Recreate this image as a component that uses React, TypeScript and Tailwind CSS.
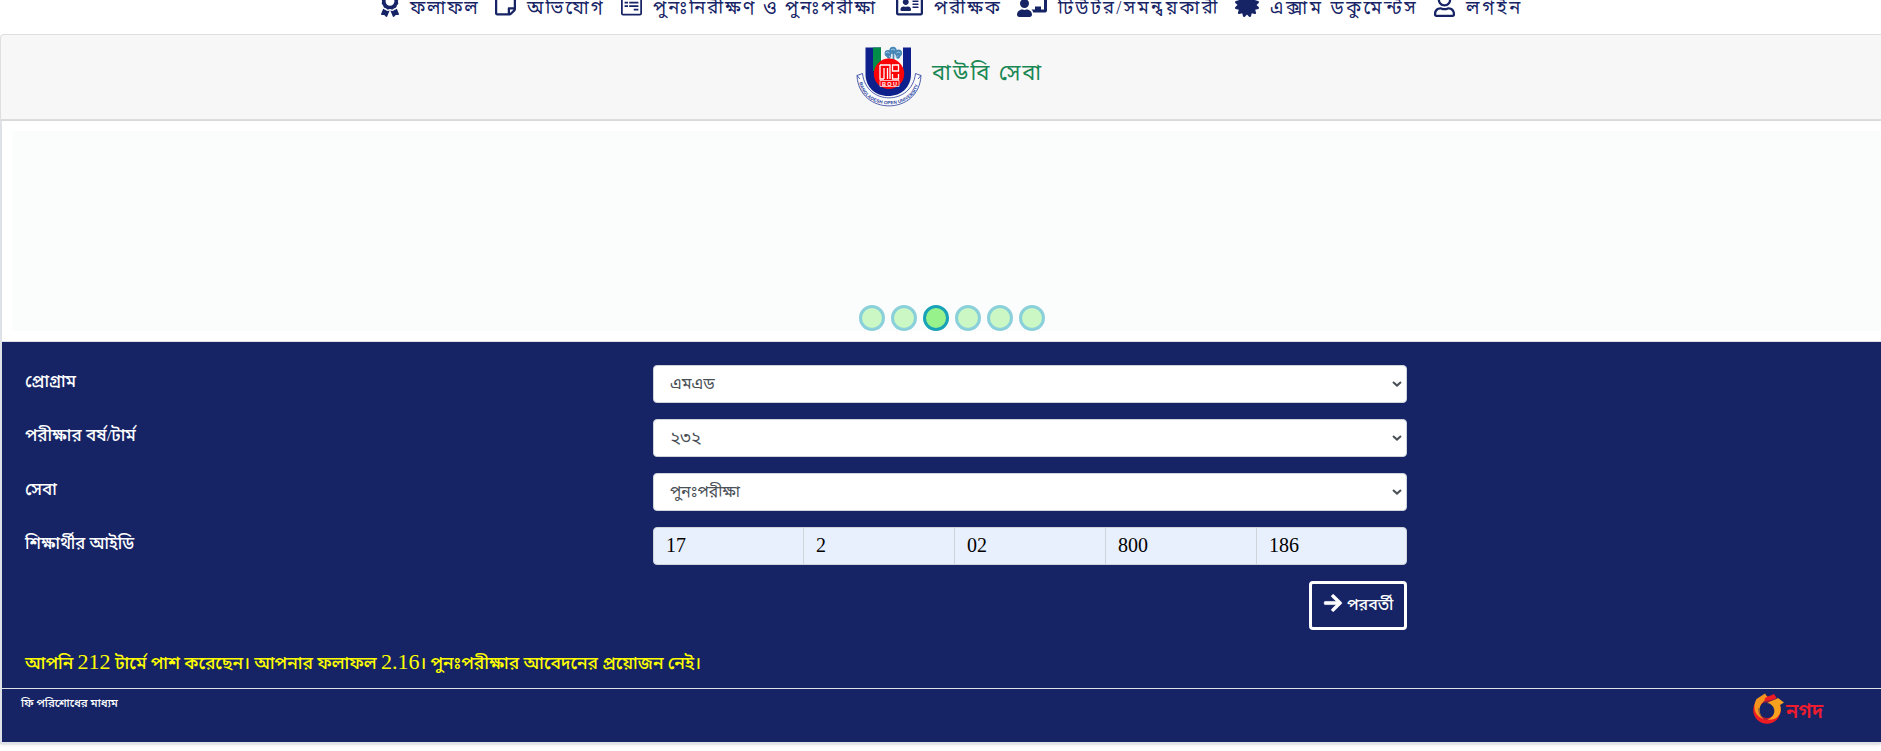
import React from "react";
import {
  FaAward,
  FaRegStickyNote,
  FaWpforms,
  FaRegAddressCard,
  FaChalkboardTeacher,
  FaCertificate,
  FaRegUser,
  FaArrowRight,
} from "react-icons/fa";

const navItems = [
  { icon: FaAward, iconBox: "w-[18px]", label: "ফলাফল", box: "w-[85px]", tracking: "tracking-[1.8px]" },
  { icon: FaRegStickyNote, iconBox: "w-[21px]", label: "অভিযোগ", box: "w-[94px]", tracking: "tracking-[2.2px]" },
  { icon: FaWpforms, iconBox: "w-[21px]", label: "পুনঃনিরীক্ষণ ও পুনঃপরীক্ষা", box: "w-[243px]", tracking: "tracking-[2px]" },
  { icon: FaRegAddressCard, iconBox: "w-[27px]", label: "পরীক্ষক", box: "w-[83px]", tracking: "tracking-[2.1px]" },
  { icon: FaChalkboardTeacher, iconBox: "w-[30px]", label: "টিউটর/সমন্বয়কারী", box: "w-[177px]", tracking: "tracking-[2.3px]" },
  { icon: FaCertificate, iconBox: "w-[24px]", label: "এক্সাম ডকুমেন্টস", box: "w-[164px]", tracking: "tracking-[2.5px]" },
  { icon: FaRegUser, iconBox: "w-[21px]", label: "লগইন", box: "w-[60px]", tracking: "tracking-[2.7px]" },
];

const selects = [
  { label: "প্রোগ্রাম", value: "এমএড", size: "text-[16px]" },
  { label: "পরীক্ষার বর্ষ/টার্ম", value: "২৩২", size: "text-[17.5px]" },
  { label: "সেবা", value: "পুনঃপরীক্ষা", size: "text-[15.7px]" },
];

const idParts = ["17", "2", "02", "800", "186"];

function Nav() {
  return (
    <nav className="flex h-[34px] shrink-0 overflow-hidden pl-[381px] text-[#162466]">
      {navItems.map(({ icon: Icon, iconBox, label, box, tracking }) => (
        <a key={label} className="flex shrink-0 whitespace-nowrap">
          <Icon className={`-mt-[7px] mr-[11px] h-6 shrink-0 ${iconBox}`} />
          <span className={`-mt-[9px] text-[18.4px] leading-[34px] ${box} ${tracking}`}>{label}</span>
        </a>
      ))}
    </nav>
  );
}

function UniversityLogo() {
  return (
    <svg viewBox="0 0 68 62" className="h-[62px] w-[68px]">
      <defs>
        <path id="ribbon" d="M4.2 35.5 C8 66 60 66 63.8 35.5" />
      </defs>
      <path d="M3.5 30.5 C5 70 63 70 64.5 30.5 L60 28 C57 59 11 59 8 28 Z" fill="#fff" />
      <path
        d="M2 29.5 C4 70 64 70 66 29.5 L60.5 27.5 C57 60 11 60 7.5 27.5 Z M2 29.5 L5 33 M66 29.5 L63 33"
        fill="none"
        stroke="#23399a"
        strokeWidth="0.8"
      />
      <path d="M10.5 1.5 H56 V28 C56 41 46.5 50 33.2 50 C20 50 10.5 41 10.5 28 Z" fill="#0e208c" />
      <path d="M26 1 H48 V22 H26 Z" fill="#f7f7f7" />
      <path d="M18 1.5 H26 V25 H18 Z" fill="#008d49" />
      <g fill="#4687b8">
        <circle cx="33" cy="7.5" r="3.4" />
        <circle cx="38" cy="4.3" r="3.6" />
        <circle cx="43.5" cy="7" r="3.6" />
        <circle cx="34" cy="10.5" r="2.2" />
        <circle cx="43" cy="10.5" r="2.2" />
        <path d="M37.6 6h1.8v9h-1.8z" />
      </g>
      <g fill="none" stroke="#d9eef6" strokeWidth="0.6">
        <path d="M30.5 7q2-2 4 0M36 4q2-2 4 0M41.5 7q2-2 4 0M34 10l3 2.5M43 9.5l-3 3" />
      </g>
      <circle cx="34" cy="27.8" r="15.2" fill="#fb0207" />
      <g transform="translate(1 0)">
        <path
          d="M24 19 H34 V33 M24 19 V33 H28 M28 22 V33 M31.5 22 V33 M36.5 19 H42.5 V25 H36.5 Z M36.5 28 V33 H42.5 V28"
          fill="none"
          stroke="#fff"
          strokeWidth="1.3"
        />
        <path d="M24 34.5 H43 V40.5 H24 Z" fill="none" stroke="#fff" strokeWidth="0.7" />
        <text x="33.5" y="39.6" textAnchor="middle" fontSize="5.6" fontWeight="700" fill="#fff" textLength="15" fontFamily="Liberation Sans, sans-serif">
          BOU
        </text>
      </g>
      <text fontSize="4.6" fontWeight="700" fill="#23399a" fontFamily="Liberation Sans, sans-serif">
        <textPath href="#ribbon" startOffset="1" textLength="78">
          BANGLADESH OPEN UNIVERSITY
        </textPath>
      </text>
    </svg>
  );
}

function NagadLogo() {
  return (
    <div className="flex text-[#ed1c2e]">
      <svg viewBox="0 0 32 31" className="h-[31px] w-8">
        <circle cx="14" cy="17" r="11" fill="none" stroke="#ed1c24" strokeWidth="5.6" />
        <path d="M3.5 6 L12 0.5 L15 5 L12 8 C5 11 5 22 11 26 C2 24 -1 14 3.5 6Z" fill="#f7941d" />
        <path d="M12 5 L21 1 L24 5.5 L17 9 L11 9.5Z" fill="#ed1c24" />
        <path d="M14 10 L25 5 L31 9.5 L27 12 C30 20 24 28 14.5 26.5 C21 24 23 18 20 13.5 C18 11 16 10 14 10Z" fill="#f7a11f" />
        <path d="M10 9 Q17 8.5 24.5 5.2 M14.5 26.5 C8 26 5 20 6 15" fill="none" stroke="#162466" strokeWidth="0.5" />
      </svg>
      <span className="mt-[4px] ml-[1px] text-[20px] leading-7 font-semibold">নগদ</span>
    </div>
  );
}

function Chevron() {
  return (
    <svg viewBox="0 0 10 6" className="h-[6px] w-[10px] text-[#495057]">
      <path d="M1 1 L5 4.6 L9 1" fill="none" stroke="currentColor" strokeWidth="2" />
    </svg>
  );
}

export default function App() {
  return (
    <div className="flex h-[751px] w-[1881px] flex-col overflow-hidden bg-white font-['Liberation_Serif','Noto_Sans_Bengali',serif]">
      <Nav />
      <header className="flex h-[87px] shrink-0 rounded-tl border-t border-b-2 border-l border-t-[#dfdfdf] border-b-[#dcdddf] border-l-[#dfdfdf] bg-[#f7f7f7] pt-[11px] pl-[854px]">
        <UniversityLogo />
        <h1 className="mt-[9px] ml-[9px] text-[22px] leading-[36px] tracking-[1.9px] whitespace-nowrap text-[#198754]">বাউবি সেবা</h1>
      </header>

      <main className="flex h-[623px] shrink-0 flex-col border-b-2 border-l-2 border-[#dee2e6] shadow-sm">
        <section className="flex h-[221px] shrink-0 flex-col border-b border-[#dee2e6] pt-[10px] pl-[10px]">
          <div className="flex h-[200px] items-end justify-center bg-[#fbfdfc] pl-[11px]">
            <div className="flex gap-[6px]">
              {[0, 1, 2, 3, 4, 5].map((i) => (
                <span
                  key={i}
                  className={
                    i === 2
                      ? "size-[26px] rounded-full border-3 border-[#17a2b8] bg-[#98f28c]"
                      : "size-[26px] rounded-full border-3 border-[#8ad0da] bg-[#cbf7c5]"
                  }
                />
              ))}
            </div>
          </div>
        </section>

        <section className="flex h-[346px] shrink-0 flex-col bg-[#162466] pt-[23px] pl-[23px] text-white">
          <div className="flex flex-col gap-4">
            {selects.map(({ label, value, size }) => (
              <div key={label} className="flex h-[38px]">
                <label className="w-[628px] pt-[2px] text-[17px] leading-[30px] font-medium">{label}</label>
                <div className="flex w-[754px] items-center justify-between rounded border border-[#ced4da] bg-white pr-1 pl-4 text-[#495057]">
                  <span className={`leading-[30px] ${size}`}>{value}</span>
                  <Chevron />
                </div>
              </div>
            ))}
            <div className="flex h-[38px]">
              <label className="w-[628px] pt-[2px] text-[16.6px] leading-[30px] font-medium">শিক্ষার্থীর আইডি</label>
              <div className="grid w-[754px] grid-cols-[149px_151px_151px_151px_150px] overflow-hidden rounded border border-[#ced4da] bg-[#e8f0fe] text-[20px] text-black">
                {idParts.map((part) => (
                  <span key={part} className="border-l border-[#ced4da] pl-3 leading-[34px] first:border-l-0">
                    {part}
                  </span>
                ))}
              </div>
            </div>
          </div>
          <div className="mt-4 flex w-[1382px] justify-end">
            <button className="flex h-[49px] w-[98px] items-start rounded border-3 border-white pt-[9px] pl-[11px] text-[16px] leading-[24px] font-medium whitespace-nowrap">
              <FaArrowRight className="mr-[4px] size-5 shrink-0" stroke="currentColor" strokeWidth="16" />
              পরবর্তী
            </button>
          </div>
          <p className="mt-[15px] text-[17.4px] leading-[34px] font-medium whitespace-nowrap text-[#ffff00]">
            আপনি <span className="text-[22px] font-normal">212</span> টার্মে পাশ করেছেন। আপনার ফলাফল{" "}
            <span className="text-[22px] font-normal">2.16</span>। পুনঃপরীক্ষার আবেদনের প্রয়োজন নেই।
          </p>
        </section>

        <footer className="flex h-[54px] shrink-0 justify-between border-t border-[#dee2e6] bg-[#162466] pt-1 pr-[58px] pl-[19px] text-white">
          <span className="text-[11.5px] leading-5 font-medium">ফি পরিশোধের মাধ্যম</span>
          <NagadLogo />
        </footer>
      </main>
    </div>
  );
}
